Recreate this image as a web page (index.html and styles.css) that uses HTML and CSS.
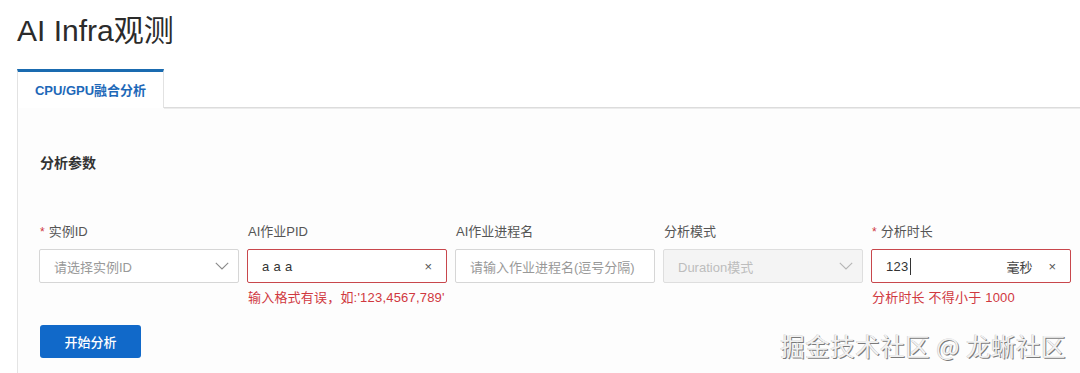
FILE: index.html
```html
<!DOCTYPE html>
<html lang="zh-CN">
<head>
<meta charset="utf-8">
<title>AI Infra观测</title>
<link rel="stylesheet" href="styles.css">
</head>
<body>
<div class="page">
  <h1 class="title">AI Infra观测</h1>
  <div class="tabs">
    <div class="tab active">CPU/GPU融合分析</div>
    <div class="tab-fill"></div>
  </div>
  <div class="panel">
    <div class="section-title">分析参数</div>
    <div class="form-row">
      <div class="field">
        <div class="label"><span class="req">*</span>实例ID</div>
        <div class="control select">
          <span class="placeholder">请选择实例ID</span>
          <svg class="chevron" width="14" height="8" viewBox="0 0 14 8"><path d="M0.8 0.8 L7 7 L13.2 0.8" fill="none" stroke="#8a8a8a" stroke-width="1.1"/></svg>
        </div>
      </div>
      <div class="field">
        <div class="label">AI作业PID</div>
        <div class="control error">
          <span class="value">a a a</span>
          <span class="clear">×</span>
        </div>
        <div class="err-msg">输入格式有误，如:'123,4567,789'</div>
      </div>
      <div class="field">
        <div class="label">AI作业进程名</div>
        <div class="control">
          <span class="placeholder">请输入作业进程名(逗号分隔)</span>
        </div>
      </div>
      <div class="field">
        <div class="label">分析模式</div>
        <div class="control select disabled">
          <span class="placeholder light">Duration模式</span>
          <svg class="chevron" width="14" height="8" viewBox="0 0 14 8"><path d="M0.8 0.8 L7 7 L13.2 0.8" fill="none" stroke="#b5b5b5" stroke-width="1.1"/></svg>
        </div>
      </div>
      <div class="field">
        <div class="label"><span class="req">*</span>分析时长</div>
        <div class="control error">
          <span class="value">123<span class="caret"></span></span>
          <span class="unit">毫秒</span>
          <span class="clear">×</span>
        </div>
        <div class="err-msg">分析时长 不得小于 1000</div>
      </div>
    </div>
    <button class="btn-primary">开始分析</button>
  </div>
  <div class="watermark">掘金技术社区 @ 龙蜥社区</div>
</div>
</body>
</html>
```
FILE: styles.css
```css
* { box-sizing: border-box; }
html, body { margin: 0; padding: 0; background: #ffffff; }
body {
  font-family: "Liberation Sans", "Noto Sans CJK SC", sans-serif;
  color: #333;
  height: 373px;
  overflow: hidden;
}
.page {
  position: relative;
  padding: 0 0 0 17px;
  height: 373px;
}
.title {
  margin: 0;
  padding-top: 13px;
  font-size: 30px;
  line-height: 36px;
  font-weight: 400;
  color: #2b2b2b;
  height: 69px;
}
.tabs {
  display: flex;
  align-items: flex-end;
}
.tab {
  width: 147px;
  height: 39px;
  border-top: 3px solid #1a6bb0;
  border-left: 1px solid #e2e2e2;
  border-right: 1px solid #e2e2e2;
  background: #fff;
  color: #1d68b8;
  font-size: 13px;
  font-weight: 700;
  display: flex;
  align-items: center;
  justify-content: center;
  padding-bottom: 1px;
}
.tab-fill {
  flex: 1;
  border-bottom: 1px solid #dcdcdc;
  box-shadow: 0 1px 0 #ececec;
}
.panel {
  border-left: 1px solid #e4e4e4;
  background: #fdfdfd;
  padding: 45px 0 0 21px;
  height: 266px;
}
.section-title {
  font-size: 14px;
  font-weight: 700;
  line-height: 20px;
  color: #333;
  padding-left: 1px;
}
.form-row {
  display: grid;
  grid-template-columns: repeat(5, 200px);
  column-gap: 8px;
  margin-top: 50px;
  align-items: start;
}
.field { display: flex; flex-direction: column; }
.label {
  font-size: 13px;
  line-height: 18px;
  color: #555;
  padding-left: 1px;
  margin-bottom: 8px;
}
.req {
  color: #d0383f;
  margin-right: 4px;
  font-size: 12px;
}
.control {
  height: 34px;
  border: 1px solid #d6d6d6;
  border-radius: 2px;
  background: #fff;
  display: flex;
  align-items: center;
  padding: 0 14px;
  font-size: 13px;
}
.control.select { padding-right: 9px; }
.control.error { border-color: #c8474c; }
.control.disabled { background: #f4f4f4; border-color: #dedede; }
.placeholder { color: #999; flex: 1; white-space: nowrap; }
.placeholder.light { color: #bdbdbd; }
.value { color: #333; flex: 1; display: flex; align-items: center; letter-spacing: 0.3px; }
.caret {
  display: inline-block;
  width: 1px;
  height: 17px;
  background: #333;
  margin-left: 1px;
}
.chevron { flex: none; }
.clear {
  color: #555;
  font-size: 13px;
  margin-right: 0;
}
.unit {
  color: #444;
  font-size: 13px;
  margin-right: 16px;
}
.err-msg {
  margin-top: 6px;
  font-size: 13px;
  line-height: 18px;
  color: #d0383f;
  padding-left: 1px;
  white-space: nowrap;
  letter-spacing: 0.2px;
}
.btn-primary {
  margin-top: 18px;
  margin-left: 1px;
  width: 101px;
  height: 33px;
  border: none;
  border-radius: 3px;
  background: #1169c9;
  color: #fff;
  font-family: "Liberation Sans", "Noto Sans CJK SC", sans-serif;
  font-size: 13px;
  font-weight: 500;
  cursor: pointer;
}
.watermark {
  position: absolute;
  right: 14px;
  bottom: 12px;
  font-size: 24.5px;
  line-height: 30px;
  color: #f2f2f2;
  text-shadow: 1px 1px 0 #7a7a7a, -0.5px -0.5px 0 #c8c8c8;
  font-family: "Noto Sans CJK SC", sans-serif;
  letter-spacing: 0.5px;
}
```
